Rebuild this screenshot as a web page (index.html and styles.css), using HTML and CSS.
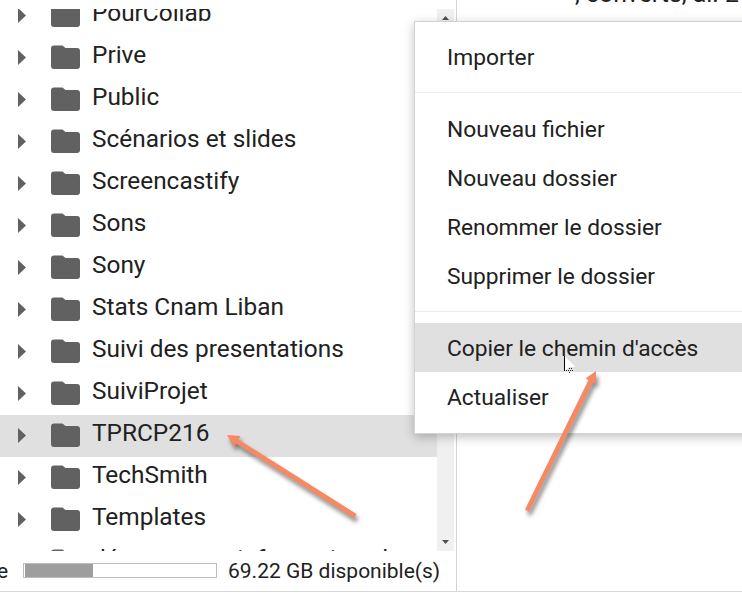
FILE: index.html
```html
<!DOCTYPE html>
<html lang="fr">
<head>
<meta charset="utf-8">
<title>Dossiers</title>
<link rel="stylesheet" href="styles.css">
</head>
<body>
<svg class="defs" width="0" height="0">
  <symbol id="folder" viewBox="0 0 29 24"><path d="M3 .5h8.500l3 2.500H26q3 0 3 3v15q0 3-3 3H3q-3 0-3-3v-17.500q0-3 3-3z"/></symbol>
  <symbol id="caret" viewBox="0 0 8 15"><path d="M0 0l8 7.500-8 7.500z"/></symbol>
</svg>
<div class="app">
  <aside class="sidebar">
    <div class="pane">
      <ul class="tree">
        <li class="row"><svg class="caret"><use href="#caret"/></svg><svg class="folder"><use href="#folder"/></svg><span>PourCollab</span></li>
        <li class="row"><svg class="caret"><use href="#caret"/></svg><svg class="folder"><use href="#folder"/></svg><span>Prive</span></li>
        <li class="row"><svg class="caret"><use href="#caret"/></svg><svg class="folder"><use href="#folder"/></svg><span>Public</span></li>
        <li class="row"><svg class="caret"><use href="#caret"/></svg><svg class="folder"><use href="#folder"/></svg><span>Scénarios et slides</span></li>
        <li class="row"><svg class="caret"><use href="#caret"/></svg><svg class="folder"><use href="#folder"/></svg><span>Screencastify</span></li>
        <li class="row"><svg class="caret"><use href="#caret"/></svg><svg class="folder"><use href="#folder"/></svg><span>Sons</span></li>
        <li class="row"><svg class="caret"><use href="#caret"/></svg><svg class="folder"><use href="#folder"/></svg><span>Sony</span></li>
        <li class="row"><svg class="caret"><use href="#caret"/></svg><svg class="folder"><use href="#folder"/></svg><span>Stats Cnam Liban</span></li>
        <li class="row"><svg class="caret"><use href="#caret"/></svg><svg class="folder"><use href="#folder"/></svg><span>Suivi des presentations</span></li>
        <li class="row"><svg class="caret"><use href="#caret"/></svg><svg class="folder"><use href="#folder"/></svg><span>SuiviProjet</span></li>
        <li class="row selected"><svg class="caret"><use href="#caret"/></svg><svg class="folder"><use href="#folder"/></svg><span>TPRCP216</span></li>
        <li class="row"><svg class="caret"><use href="#caret"/></svg><svg class="folder"><use href="#folder"/></svg><span>TechSmith</span></li>
        <li class="row"><svg class="caret"><use href="#caret"/></svg><svg class="folder"><use href="#folder"/></svg><span>Templates</span></li>
        <li class="row"><svg class="caret"><use href="#caret"/></svg><svg class="folder"><use href="#folder"/></svg><span>département informatique l</span></li>
      </ul>
      <div class="scrollbar"><i class="up"></i><i class="down"></i></div>
    </div>
    <footer class="quota"><span>e</span><div class="meter"><div class="used"></div></div><span>69.22 GB disponible(s)</span></footer>
  </aside>
  <main class="content"><p>, converts, al. 21</p></main>
</div>
<nav class="menu">
  <div class="item">Importer</div>
  <hr>
  <div class="item">Nouveau fichier</div>
  <div class="item">Nouveau dossier</div>
  <div class="item">Renommer le dossier</div>
  <div class="item">Supprimer le dossier</div>
  <hr>
  <div class="item active">Copier le chemin d'accès</div>
  <div class="item">Actualiser</div>
</nav>
<svg class="overlay" width="742" height="596" viewBox="0 0 742 596">
  <g class="arrows">
    <path d="M227 435l13.500 1-2 3.500L356.500 514l-2.500 4.500L236 443.500l-2 3.500z"/>
    <path d="M596 371v13l-3-1.500L529 512l-4-2.500L588.500 380l-3-1.500z"/>
  </g>
  <path class="pointer" d="M564.500 356l11 11h-5l-2 1-4 3z"/>
  <path class="pointer-edge" d="M564.500 356v15"/>
  <path class="pointer-dots" d="M566 370.500h3M569 368.500h3M570 370.500h3M569 372.500h2"/>
</svg>
</body>
</html>
```
FILE: styles.css
```css
* { box-sizing: border-box; }
body {
  margin: 0;
  width: 742px;
  height: 596px;
  overflow: hidden;
  background: #fff;
  color: #212121;
  font-family: Roboto, "Liberation Sans", sans-serif;
}
.defs { position: absolute; }
.app { display: flex; height: 592px; border-bottom: 1px solid #d8d8d8; }
.sidebar {
  width: 457px;
  padding-top: 9px;
  border-right: 1px solid #d3d3d3;
  display: flex;
  flex-direction: column;
}
.pane { display: flex; width: 454px; height: 542px; overflow: hidden; }
.tree { flex: 1; list-style: none; margin: -14px 0 0; padding: 0; }
.row {
  display: flex;
  align-items: center;
  height: 42px;
  padding: 0 0 2px 18px;
  font-size: 24.4px;
  line-height: 34px;
  white-space: nowrap;
}
.row span { margin-bottom: 5px; }
.selected { background: #e0e0e0; }
.caret { width: 8px; height: 15px; margin-right: 25px; fill: #616161; }
.folder { width: 29px; height: 24px; margin: 0 12px 0 0; fill: #616161; }
.scrollbar {
  display: flex;
  flex-direction: column;
  justify-content: space-between;
  align-items: center;
  width: 17px;
  padding: 7px 0;
  background: #f0f0f0;
}
.up, .down { width: 7px; height: 4px; background: #505050; }
.up { clip-path: polygon(50% 0, 100% 100%, 0 100%); }
.down { clip-path: polygon(0 0, 100% 0, 50% 100%); }
.quota { display: flex; align-items: center; height: 38px; font-size: 21px; white-space: nowrap; }
.quota span { padding-top: 2px; }
.quota span:first-child { width: 23px; margin-left: -3px; }
.meter { width: 194px; height: 15px; margin: 0 11px 0 3px; padding: 0 1px; border: 1px solid #bdbdbd; }
.used { width: 68px; height: 13px; background: #9e9e9e; }
.content { flex: 1; overflow: hidden; }
.content p { margin: -20px 0 0 118px; font-size: 24.8px; line-height: 28px; white-space: nowrap; }
.menu {
  position: absolute;
  left: 414px;
  top: 21px;
  width: 340px;
  height: 413px;
  padding: 10px 0;
  background: #fff;
  border: 1px solid #d3d3d3;
  box-shadow: 0 3px 10px rgba(0, 0, 0, .25);
}
.item { height: 49px; padding-left: 32px; font-size: 22.75px; line-height: 51px; }
.menu hr { height: 1px; margin: 11px 0; border: 0; background: #ebebeb; }
.active { background: #e0e0e0; }
.overlay { position: absolute; left: 0; top: 0; }
.arrows { fill: #f58963; filter: drop-shadow(2px 4px 2px rgba(0, 0, 0, .45)); }
.pointer { fill: #fff; }
.pointer-edge { stroke: #000; }
.pointer-dots { stroke: #222; stroke-dasharray: 1 1; }
```
